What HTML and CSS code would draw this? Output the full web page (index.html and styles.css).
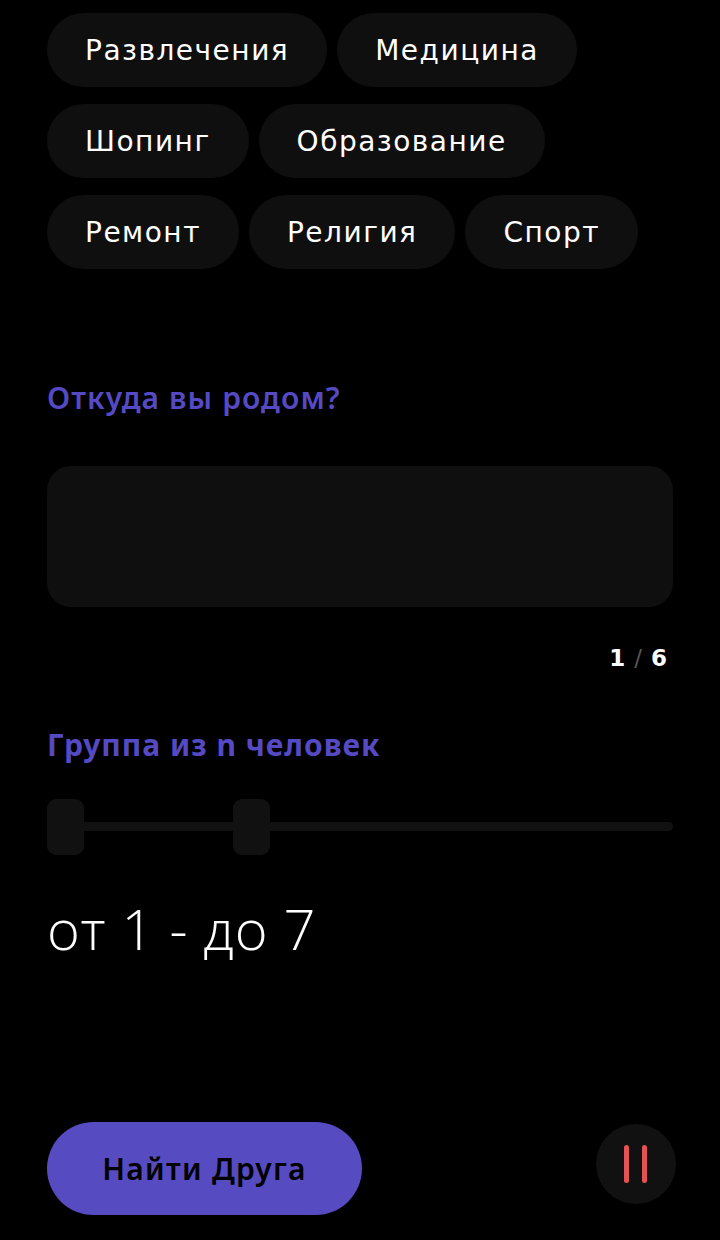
FILE: index.html
```html
<!DOCTYPE html>
<html lang="ru">
<head>
<meta charset="utf-8">
<title>Найти Друга</title>
<link rel="stylesheet" href="styles.css">
</head>
<body>
<div class="page">
  <div class="chips">
    <span class="chip">Развлечения</span>
    <span class="chip">Медицина</span>
    <span class="chip">Шопинг</span>
    <span class="chip">Образование</span>
    <span class="chip">Ремонт</span>
    <span class="chip">Религия</span>
    <span class="chip">Спорт</span>
  </div>

  <h2 class="section-title origin-title">Откуда вы родом?</h2>
  <div class="field"></div>
  <div class="counter"><b>1</b><span class="slash">/</span><b>6</b></div>

  <h2 class="section-title group-title">Группа из n человек</h2>
  <div class="slider">
    <div class="track"></div>
    <div class="thumb" style="left: 0px"></div>
    <div class="thumb" style="left: 186px"></div>
  </div>
  <div class="range">от 1 - до 7</div>

  <div class="footer">
    <button class="find-btn">Найти Друга</button>
    <button class="pause-btn" aria-label="Пауза">
      <svg width="24" height="38" viewBox="0 0 24 38">
        <line x1="2.5" y1="2.5" x2="2.5" y2="35.5" stroke="#e45353" stroke-width="5" stroke-linecap="round"/>
        <line x1="20.5" y1="2.5" x2="20.5" y2="35.5" stroke="#e45353" stroke-width="5" stroke-linecap="round"/>
      </svg>
    </button>
  </div>
</div>
</body>
</html>
```

FILE: styles.css
```css
* { box-sizing: border-box; }

html, body {
  margin: 0;
  padding: 0;
  background: #000;
}

body {
  font-family: "DejaVu Sans", "Noto Sans", sans-serif;
  color: #fff;
}

.page {
  width: 720px;
  height: 1240px;
  padding: 13px 47px 25px;
  display: flex;
  flex-direction: column;
}

.chips {
  display: flex;
  flex-wrap: wrap;
  gap: 17px 10px;
}

.chip {
  height: 74px;
  padding: 0 38px;
  display: inline-flex;
  align-items: center;
  border-radius: 37px;
  background: #0f0f0f;
  font-size: 28px;
  font-weight: 400;
  letter-spacing: 1.5px;
  color: #fff;
}

.section-title {
  margin: 0;
  font-family: "Noto Sans", sans-serif;
  line-height: 34px;
  color: #554ac3;
}

.origin-title {
  margin-top: 112px;
  font-size: 30px;
  font-weight: 600;
  letter-spacing: 1.1px;
}

.field {
  margin-top: 51px;
  height: 141px;
  border-radius: 24px;
  background: #0f0f0f;
}

.counter {
  margin-top: 38px;
  text-align: right;
  padding-right: 6px;
  font-size: 23px;
  line-height: 26px;
  color: #fff;
}

.counter b { font-weight: 700; }

.slash {
  color: #555;
  margin: 0 9px;
}

.group-title {
  margin-top: 57px;
  font-size: 30px;
  font-weight: 700;
  letter-spacing: 1px;
}

.slider {
  position: relative;
  margin-top: 37px;
  height: 56px;
}

.track {
  margin-top: 23px;
  height: 9px;
  border-radius: 5px;
  background: #111;
}

.thumb {
  position: absolute;
  top: 0;
  width: 37px;
  height: 56px;
  border-radius: 9px;
  background: #111;
}

.range {
  margin-top: 37px;
  font-family: "Open Sans", sans-serif;
  font-size: 56px;
  font-weight: 300;
  letter-spacing: 0.7px;
  line-height: 72px;
  color: #fff;
}

.footer {
  margin-top: auto;
  margin-right: -3px;
  display: flex;
  justify-content: space-between;
  align-items: flex-start;
}

.find-btn {
  width: 315px;
  height: 93px;
  border: none;
  border-radius: 47px;
  background: #564bc1;
  color: #000;
  font-family: "Noto Sans", sans-serif;
  font-size: 30px;
  font-weight: 600;
  letter-spacing: 1.3px;
  padding: 0;
  cursor: pointer;
}

.pause-btn {
  margin-top: 2px;
  width: 80px;
  height: 80px;
  border: none;
  border-radius: 50%;
  background: #111;
  padding: 0;
  display: flex;
  align-items: center;
  justify-content: center;
}
```
